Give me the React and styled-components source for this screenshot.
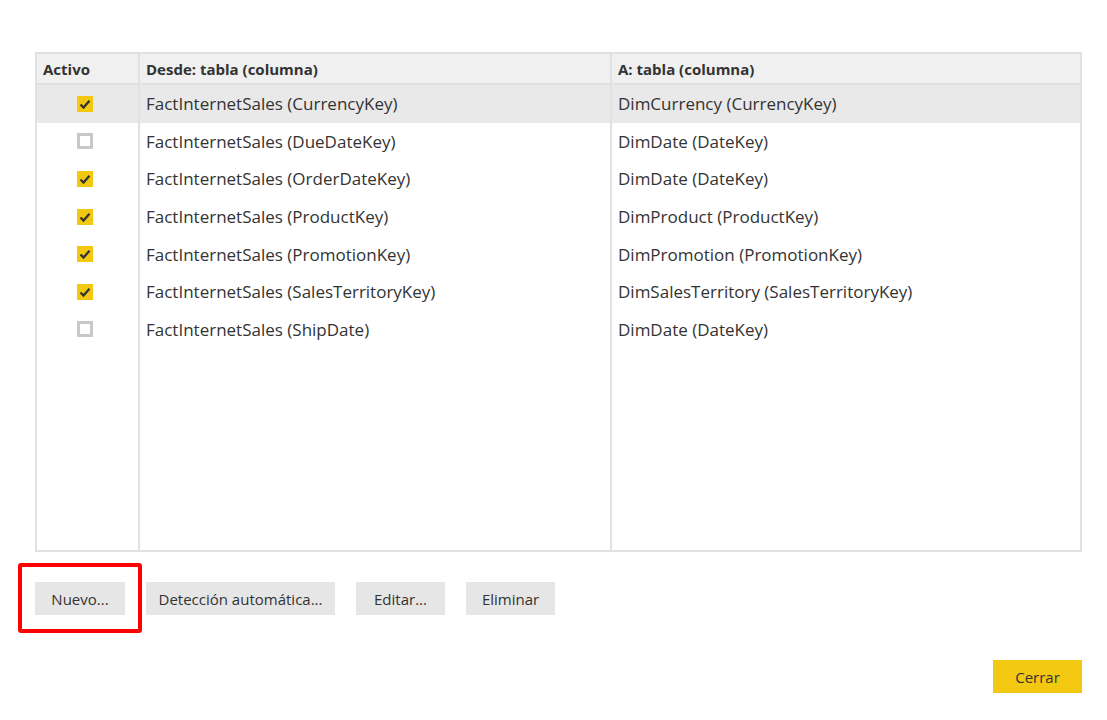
import React from "react";
import styled, { createGlobalStyle } from "styled-components";

const GlobalStyle = createGlobalStyle`
  body {
    margin: 0;
    background: #ffffff;
    font-family: "Open Sans", "Noto Sans", sans-serif;
    color: #333333;
  }
`;

const relations = [
  { active: true, from: "FactInternetSales (CurrencyKey)", to: "DimCurrency (CurrencyKey)" },
  { active: false, from: "FactInternetSales (DueDateKey)", to: "DimDate (DateKey)" },
  { active: true, from: "FactInternetSales (OrderDateKey)", to: "DimDate (DateKey)" },
  { active: true, from: "FactInternetSales (ProductKey)", to: "DimProduct (ProductKey)" },
  { active: true, from: "FactInternetSales (PromotionKey)", to: "DimPromotion (PromotionKey)" },
  { active: true, from: "FactInternetSales (SalesTerritoryKey)", to: "DimSalesTerritory (SalesTerritoryKey)" },
  { active: false, from: "FactInternetSales (ShipDate)", to: "DimDate (DateKey)" },
];

const Page = styled.main`
  width: 1047px;
  padding: 52px 0 0 35px;
`;

const Table = styled.div`
  display: grid;
  grid-template-columns: 101px 470px 1fr;
  grid-template-rows: 31px repeat(7, 37.6px) 1fr;
  column-gap: 2px;
  height: 496px;
  border: 2px solid #e1e1e1;
  background: #e1e1e1;
`;

const HeadCell = styled.div`
  display: flex;
  align-items: center;
  padding-left: 6px;
  background: #f0f0f0;
  border-bottom: 2px solid #e1e1e1;
  font-size: 15px;
  font-weight: 700;
  color: #333333;
`;

const Cell = styled.div`
  display: flex;
  align-items: center;
  padding-left: ${(p) => (p.$check ? "40px" : "6px")};
  background: ${(p) => (p.$selected ? "#e9e9e9" : "#ffffff")};
  font-size: 17px;
  color: #333333;
  white-space: nowrap;
`;

const Filler = styled.div`
  background: #ffffff;
`;

const Box = styled.span`
  box-sizing: border-box;
  width: 16px;
  height: 16px;
  display: flex;
  align-items: center;
  justify-content: center;
  background: ${(p) => (p.$on ? "#f2c811" : "#ffffff")};
  border: ${(p) => (p.$on ? "none" : "3px solid #c8c8c8")};
`;

const Actions = styled.div`
  display: flex;
  gap: 21px;
  margin-top: 30px;
`;

const Button = styled.button`
  position: relative;
  height: 33px;
  width: ${(p) => p.$w}px;
  border: none;
  background: ${(p) => (p.$primary ? "#f2c811" : "#e6e6e6")};
  font-family: "Open Sans", "Noto Sans", sans-serif;
  font-size: 15px;
  color: #333333;
  padding: 0;
`;

const Highlight = styled.span`
  position: absolute;
  left: -17px;
  top: -19px;
  width: 124px;
  height: 70px;
  box-sizing: border-box;
  border: 4px solid #ff0000;
  border-radius: 3px;
  pointer-events: none;
`;

const Footer = styled.div`
  display: flex;
  justify-content: flex-end;
  margin-top: 45px;
`;

const Check = ({ on }) => (
  <Box $on={on}>
    {on && (
      <svg width="12" height="12" viewBox="0 0 12 12">
        <polyline points="1.5,6.5 4.5,9.5 10.5,2.8" fill="none" stroke="#333" strokeWidth="2.3" />
      </svg>
    )}
  </Box>
);

export default function App() {
  return (
    <>
      <GlobalStyle />
      <Page>
        <Table>
          <HeadCell>Activo</HeadCell>
          <HeadCell>Desde: tabla (columna)</HeadCell>
          <HeadCell>A: tabla (columna)</HeadCell>
          {relations.map((r, i) => (
            <React.Fragment key={i}>
              <Cell $check $selected={i === 0}>
                <Check on={r.active} />
              </Cell>
              <Cell $selected={i === 0}>{r.from}</Cell>
              <Cell $selected={i === 0}>{r.to}</Cell>
            </React.Fragment>
          ))}
          <Filler />
          <Filler />
          <Filler />
        </Table>
        <Actions>
          <Button $w={90}>
            Nuevo...
            <Highlight />
          </Button>
          <Button $w={189}>Detección automática...</Button>
          <Button $w={89}>Editar...</Button>
          <Button $w={89}>Eliminar</Button>
        </Actions>
        <Footer>
          <Button $w={89} $primary>Cerrar</Button>
        </Footer>
      </Page>
    </>
  );
}
